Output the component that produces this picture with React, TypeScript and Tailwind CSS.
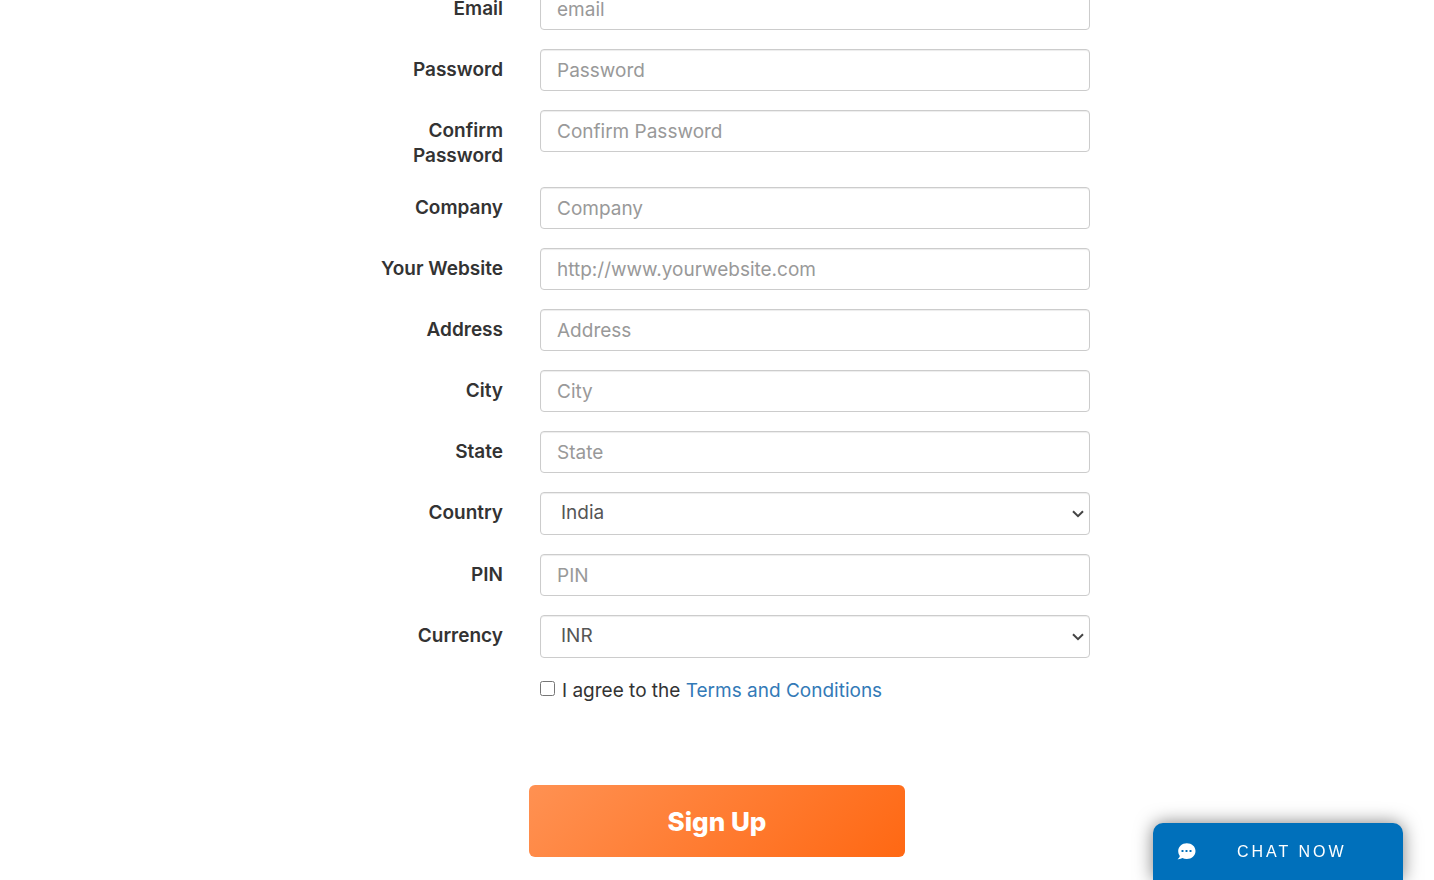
import React, { useState } from "react";

interface FieldProps {
  id: string;
  label: string;
  placeholder?: string;
  type?: string;
  options?: string[];
}

const fields: FieldProps[] = [
  { id: "email", label: "Email", placeholder: "email", type: "email" },
  { id: "password", label: "Password", placeholder: "Password", type: "password" },
  {
    id: "confirmPassword",
    label: "Confirm Password",
    placeholder: "Confirm Password",
    type: "password",
  },
  { id: "company", label: "Company", placeholder: "Company" },
  { id: "website", label: "Your Website", placeholder: "http://www.yourwebsite.com" },
  { id: "address", label: "Address", placeholder: "Address" },
  { id: "city", label: "City", placeholder: "City" },
  { id: "state", label: "State", placeholder: "State" },
  { id: "country", label: "Country", options: ["India", "Singapore", "United States"] },
  { id: "pin", label: "PIN", placeholder: "PIN" },
  { id: "currency", label: "Currency", options: ["INR", "USD"] },
];

const controlClass =
  "block w-full rounded border border-[#ccc] bg-white text-[19px] text-[#555] shadow-[inset_0_1px_1px_rgba(0,0,0,0.075)] outline-none placeholder:text-[#999] focus:border-[#66afe9]";

const Field: React.FC<FieldProps> = ({ id, label, placeholder, type = "text", options }) => {
  return (
    <div className="mb-[19px] grid grid-cols-1 items-start md:grid-cols-[159px_1fr] md:gap-x-[37px]">
      <label
        htmlFor={id}
        className="pt-2 text-[19px] leading-[25px] font-semibold text-[#333] md:pl-5 md:text-right"
      >
        {label}
      </label>
      {options ? (
        <div className="relative">
          <select
            id={id}
            name={id}
            className={`${controlClass} h-[43px] appearance-none pr-8 pl-5`}
          >
            {options.map((option) => (
              <option key={option} value={option}>
                {option}
              </option>
            ))}
          </select>
          {/* flecha del desplegable */}
          <svg
            className="pointer-events-none absolute top-[18px] right-1.5"
            width="12"
            height="8"
            viewBox="0 0 12 8"
            fill="none"
            stroke="#444"
            strokeWidth="2"
            aria-hidden="true"
          >
            <path d="M1 1.200 6 6.200 11 1.200" />
          </svg>
        </div>
      ) : (
        <input
          id={id}
          name={id}
          type={type}
          placeholder={placeholder}
          className={`${controlClass} h-[42px] px-4`}
        />
      )}
    </div>
  );
};

const ChatIcon = () => (
  <svg width="19" height="17" viewBox="0 0 19 17" aria-hidden="true">
    <path
      fill="#fff"
      d="M9.800 0.200C5 0.200 1.200 3.600 1.200 8c0 1.900.6 3.500 1.600 4.900C2.600 14.100 1.800 15.200 0.500 16.200c2 .2 3.600-.2 4.900-1.100 1.300.6 2.800.9 4.400.9 4.900 0 8.700-3.500 8.700-8S14.700.2 9.800.2Z"
    />
    <g fill="#0070bb">
      <rect x="4.500" y="7" width="2" height="2" rx=".5" />
      <rect x="8.500" y="7" width="2" height="2" rx=".5" />
      <rect x="12.500" y="7" width="2" height="2" rx=".5" />
    </g>
  </svg>
);

const App: React.FC = () => {
  const [agreed, setAgreed] = useState(false);

  return (
    <div className="overflow-hidden bg-white font-['Inter','Open_Sans',sans-serif] text-[#333]">
      <form
        className="mx-auto -mt-3 max-w-[778px] px-4 pb-6"
        onSubmit={(e) => e.preventDefault()}
      >
        {fields.map((field) => (
          <Field key={field.id} {...field} />
        ))}

        <div className="flex items-start text-[19px] leading-[27px] md:pl-[196px]">
          <input
            type="checkbox"
            id="agree"
            className="mt-1 mr-[7px] size-[15px]"
            checked={agreed}
            onChange={(e) => setAgreed(e.target.checked)}
          />
          <p>
            <label htmlFor="agree">I agree to the</label>{" "}
            <a href="#terms" className="text-[#337ab7] hover:underline">
              Terms and Conditions
            </a>
          </p>
        </div>

        <button
          type="submit"
          className="mx-auto mt-[81px] block h-[72px] w-full max-w-[376px] rounded-md bg-[linear-gradient(135deg,#ff9152,#ff6813)] text-[26px] font-extrabold text-white"
        >
          Sign Up
        </button>
      </form>

      <button
        type="button"
        className="fixed right-[31px] bottom-0 flex h-[57px] w-[250px] items-center rounded-t-[10px] bg-[#0070bb] pl-6 font-['Liberation_Sans',Arial,sans-serif] text-base tracking-[3px] text-white shadow-[0_0_18px_rgba(0,0,0,0.5)]"
      >
        <ChatIcon />
        <span className="ml-[41px]">CHAT NOW</span>
      </button>
    </div>
  );
};

export default App;
